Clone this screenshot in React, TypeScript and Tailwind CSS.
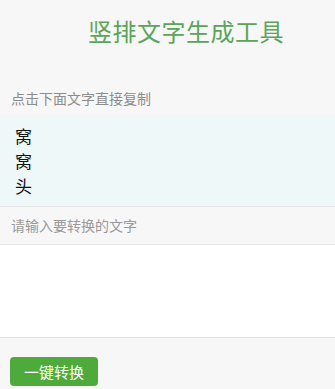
import { useState } from "react"

const font = { fontFamily: '"Noto Sans CJK SC", "Noto Sans", sans-serif' }

function VerticalText({ text }: { text: string }) {
	return (
		<div className="flex flex-col">
			{text.split("").map((c, i) => (
				<span key={i} className="text-[17px] leading-[25px] text-[#111]">{c}</span>
			))}
		</div>
	)
}

export default function App() {
	const [input, setInput] = useState("")

	return (
		<div className="flex flex-col w-[335px] h-[389px] overflow-hidden bg-[#f7f7f7]" style={font}>
			<h1 className="pt-[15px] pl-[88px] text-[24px] leading-[32px] text-[#5ba55a] tracking-[0.5px]">竖排文字生成工具</h1>

			<div className="mt-[42px] pl-[11px] text-[14px] leading-[18px] text-[#8c8c8c]">点击下面文字直接复制</div>

			<div className="mt-[8px] h-[92px] bg-[#eef8f9] pl-[15px] pt-[8px] border-b border-[#e6e6e6]">
				<VerticalText text="窝窝头" />
			</div>

			<div className="h-[38px] flex items-center pl-[11px] text-[14px] text-[#999] border-b border-[#e6e6e6]">
				请输入要转换的文字
			</div>

			<textarea
				value={input}
				onChange={e => setInput(e.target.value)}
				className="block w-full h-[93px] bg-white border-b border-[#e3e3e3] resize-none outline-none p-2 text-[14px]"
			/>

			<div className="flex pt-[19px] pl-[10px]">
				<button className="w-[88px] h-[29px] rounded-[4px] bg-[#4eab3b] text-white text-[15px] leading-[29px]">一键转换</button>
			</div>
		</div>
	)
}
